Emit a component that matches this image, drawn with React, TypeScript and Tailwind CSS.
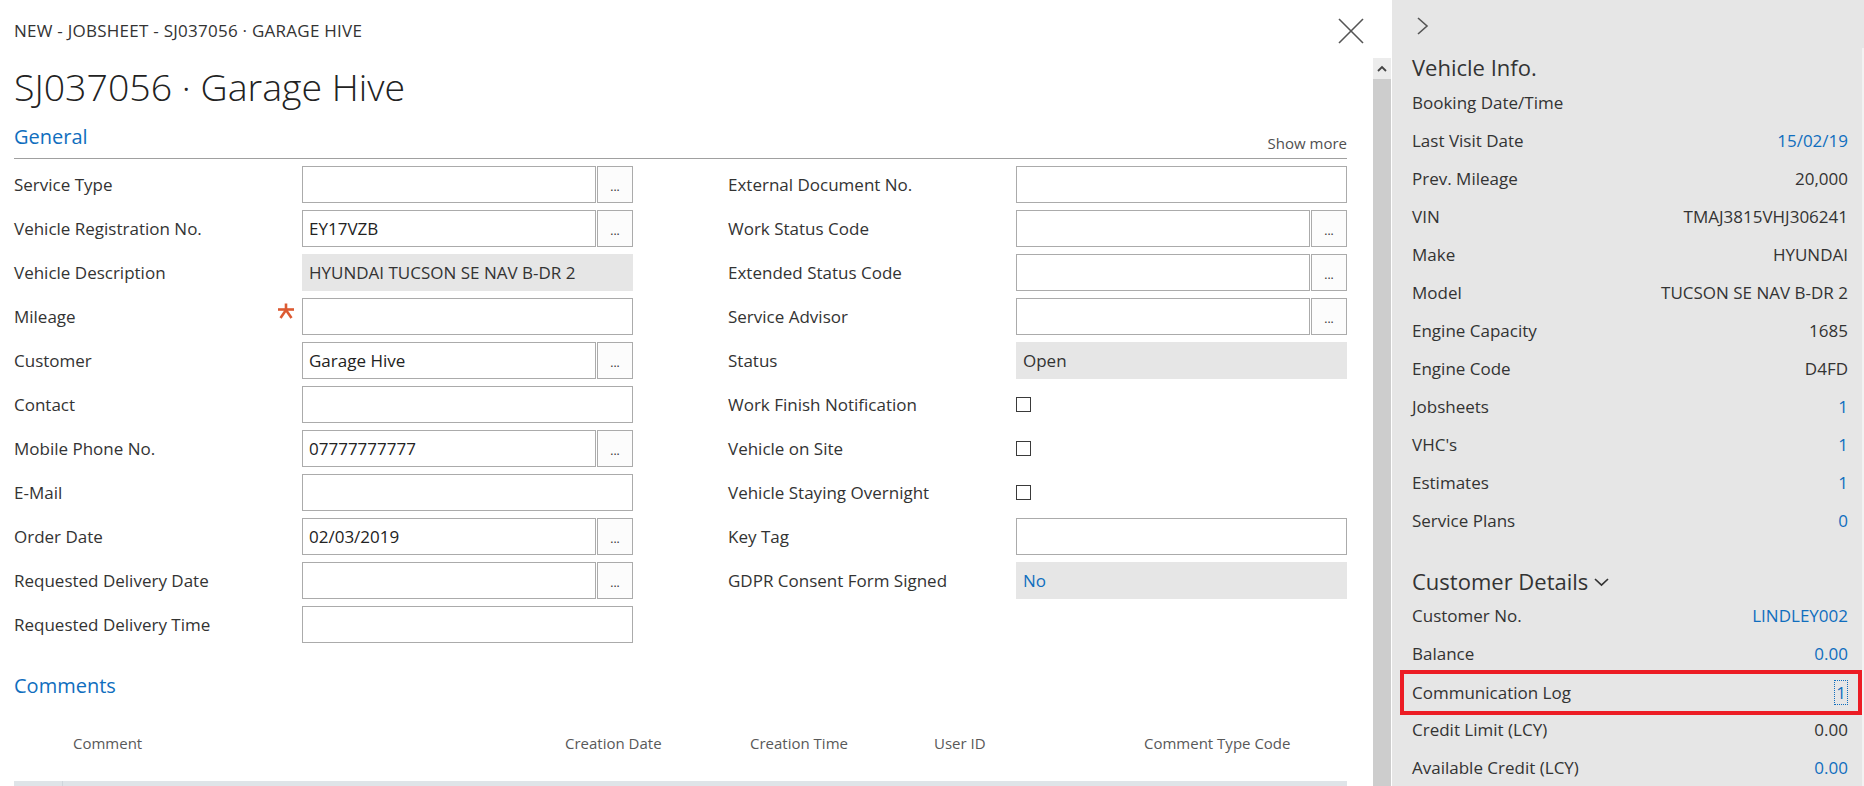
import type { FC } from "react";

type Field = {
  label: string;
  value?: string;
  kind: "input" | "lookup" | "readonly" | "check";
  required?: boolean;
  link?: boolean;
};

const leftFields: Field[] = [
  { label: "Service Type", kind: "lookup" },
  { label: "Vehicle Registration No.", value: "EY17VZB", kind: "lookup" },
  { label: "Vehicle Description", value: "HYUNDAI TUCSON SE NAV B-DR 2", kind: "readonly" },
  { label: "Mileage", kind: "input", required: true },
  { label: "Customer", value: "Garage Hive", kind: "lookup" },
  { label: "Contact", kind: "input" },
  { label: "Mobile Phone No.", value: "07777777777", kind: "lookup" },
  { label: "E-Mail", kind: "input" },
  { label: "Order Date", value: "02/03/2019", kind: "lookup" },
  { label: "Requested Delivery Date", kind: "lookup" },
  { label: "Requested Delivery Time", kind: "input" }
];

const rightFields: Field[] = [
  { label: "External Document No.", kind: "input" },
  { label: "Work Status Code", kind: "lookup" },
  { label: "Extended Status Code", kind: "lookup" },
  { label: "Service Advisor", kind: "lookup" },
  { label: "Status", value: "Open", kind: "readonly" },
  { label: "Work Finish Notification", kind: "check" },
  { label: "Vehicle on Site", kind: "check" },
  { label: "Vehicle Staying Overnight", kind: "check" },
  { label: "Key Tag", kind: "input" },
  { label: "GDPR Consent Form Signed", value: "No", kind: "readonly", link: true }
];

type Info = { label: string; value?: string; link?: boolean; focus?: boolean };

const vehicleInfo: Info[] = [
  { label: "Booking Date/Time" },
  { label: "Last Visit Date", value: "15/02/19", link: true },
  { label: "Prev. Mileage", value: "20,000" },
  { label: "VIN", value: "TMAJ3815VHJ306241" },
  { label: "Make", value: "HYUNDAI" },
  { label: "Model", value: "TUCSON SE NAV B-DR 2" },
  { label: "Engine Capacity", value: "1685" },
  { label: "Engine Code", value: "D4FD" },
  { label: "Jobsheets", value: "1", link: true },
  { label: "VHC's", value: "1", link: true },
  { label: "Estimates", value: "1", link: true },
  { label: "Service Plans", value: "0", link: true }
];

const customerInfo: Info[] = [
  { label: "Customer No.", value: "LINDLEY002", link: true },
  { label: "Balance", value: "0.00", link: true },
  { label: "Communication Log", value: "1", link: true, focus: true },
  { label: "Credit Limit (LCY)", value: "0.00" },
  { label: "Available Credit (LCY)", value: "0.00", link: true }
];

const Control: FC<{ field: Field }> = ({ field }) => {
  if (field.kind === "check") {
    return (
      <div className="flex h-full items-center">
        <div className="h-[15px] w-[15px] border border-[#3a3a3a] bg-white" />
      </div>
    );
  }
  if (field.kind === "readonly") {
    return (
      <div
        className={`flex h-full items-center bg-[#e6e6e6] pl-[7px] ${
          field.link ? "text-[#106ebe]" : "text-[#333]"
        }`}
      >
        {field.value}
      </div>
    );
  }
  const box = (
    <div className="flex h-full min-w-0 flex-1 items-center border border-[#ababab] bg-white pl-[6px] text-[#222]">
      {field.value}
    </div>
  );
  if (field.kind === "input") return <div className="flex h-full">{box}</div>;
  return (
    <div className="flex h-full gap-[1px]">
      {box}
      <div className="flex h-full w-[36px] shrink-0 items-center justify-center border border-[#ababab] bg-[#fcfcfc] pt-[5px] text-[12px] leading-[12px] text-[#333]">
        ...
      </div>
    </div>
  );
};

const FieldRow: FC<{ field: Field }> = ({ field }) => (
  <div className="flex h-[37px] shrink-0 items-center">
    <div className="flex w-[288px] shrink-0 items-center justify-between pr-[7px] text-[#333]">
      <span>{field.label}</span>
      {field.required && (
        <svg width="18" height="16" viewBox="0 0 18 16" className="-mt-[12px]">
          <g stroke="#dc5a32" strokeWidth="2.6" strokeLinecap="butt">
            <line x1="9" y1="0.5" x2="9" y2="8" />
            <line x1="1" y1="6.5" x2="17" y2="6.5" />
            <line x1="9" y1="7" x2="3.5" y2="15" />
            <line x1="9" y1="7" x2="14.5" y2="15" />
          </g>
        </svg>
      )}
    </div>
    <div className="h-full w-[331px] shrink-0">
      <Control field={field} />
    </div>
  </div>
);

const InfoRow: FC<{ item: Info }> = ({ item }) => {
  const value = (
    <span className={item.link ? "text-[#106ebe]" : "text-[#333]"}>
      {item.focus ? (
        <span className="border border-dotted border-[#106ebe] px-[1px] leading-[24px]">{item.value}</span>
      ) : (
        item.value
      )}
    </span>
  );
  if (item.focus) {
    return (
      <div className="-mb-[4px] -ml-[12px] -mr-[14px] -mt-[3px] flex h-[45px] shrink-0 items-center justify-between border-[4px] border-[#ec1c24] pl-[8px] pr-[10px]">
        <span className="text-[#333]">{item.label}</span>
        {value}
      </div>
    );
  }
  return (
    <div className="flex h-[38px] shrink-0 items-center justify-between">
      <span className="text-[#333]">{item.label}</span>
      {value}
    </div>
  );
};

const commentCols = [
  { label: "Comment", w: "w-[492px]" },
  { label: "Creation Date", w: "w-[185px]" },
  { label: "Creation Time", w: "w-[184px]" },
  { label: "User ID", w: "w-[210px]" },
  { label: "Comment Type Code", w: "w-[200px]" }
];

export default function App() {
  return (
    <div className="flex h-[786px] w-[1864px] overflow-hidden bg-white font-['Open_Sans',sans-serif] text-[17px] leading-[22px]">
      {/* main card */}
      <div className="flex w-[1373px] shrink-0 flex-col overflow-hidden pl-[14px] pr-[26px]">
        <div className="mt-[18px] flex h-[25px] shrink-0 items-center justify-between">
          <span className="text-[17px] leading-[20px] tracking-[0.25px] text-[#333]">
            NEW - JOBSHEET - SJ037056 · GARAGE HIVE
          </span>
          <svg width="26" height="26" viewBox="0 0 26 26" className="-mr-[17px]">
            <g stroke="#555" strokeWidth="1.6">
              <line x1="1" y1="1" x2="25" y2="25" />
              <line x1="25" y1="1" x2="1" y2="25" />
            </g>
          </svg>
        </div>
        <h1 className="mt-[20px] shrink-0 text-[37.5px] font-light leading-[48px] text-[#222]">SJ037056 · Garage Hive</h1>
        <div className="mt-[12px] flex h-[36px] shrink-0 justify-between border-b border-[#a0a0a0]">
          <span className="text-[20px] leading-[28px] text-[#106ebe]">General</span>
          <span className="mt-[10px] text-[15px] leading-[20px] text-[#505050]">Show more</span>
        </div>
        <div className="mt-[7px] flex shrink-0 gap-[95px]">
          <div className="flex flex-col gap-[7px]">
            {leftFields.map((f) => (
              <FieldRow key={f.label} field={f} />
            ))}
          </div>
          <div className="flex flex-col gap-[7px]">
            {rightFields.map((f) => (
              <FieldRow key={f.label} field={f} />
            ))}
          </div>
        </div>
        <div className="mt-[29px] shrink-0 text-[20px] leading-[28px] text-[#106ebe]">Comments</div>
        <div className="mt-[33px] flex shrink-0 pl-[59px] text-[15px] leading-[20px] text-[#595959]">
          {commentCols.map((c) => (
            <div key={c.label} className={`${c.w} shrink-0`}>
              {c.label}
            </div>
          ))}
        </div>
        <div className="mt-[28px] flex h-[8px] shrink-0 bg-[#dfe4e8]">
          <div className="w-[49px] border-r border-[#cfd6dc]" />
        </div>
      </div>

      {/* scrollbar */}
      <div className="flex w-[18px] shrink-0 flex-col pt-[58px]">
        <div className="flex h-[21px] shrink-0 items-center justify-center bg-[#ececec]">
          <svg width="10" height="7" viewBox="0 0 10 7">
            <polyline points="1,6 5,2 9,6" fill="none" stroke="#444" strokeWidth="1.8" />
          </svg>
        </div>
        <div className="flex-1 bg-[#cdcdcd]" />
      </div>
      <div className="w-[1px] shrink-0" />

      {/* fact box pane */}
      <div className="flex w-[472px] shrink-0 bg-[#e6e6e6]">
        <div className="flex min-w-0 flex-1 flex-col overflow-hidden pl-[20px] pr-[14px]">
          <svg width="13" height="18" viewBox="0 0 13 18" className="ml-[4px] mt-[17px] shrink-0">
            <polyline points="2,1 11,9 2,17" fill="none" stroke="#555" strokeWidth="1.6" />
          </svg>
          <div className="mt-[18px] shrink-0 text-[22px] leading-[28px] text-[#333]">Vehicle Info.</div>
          <div className="mt-[3px] flex shrink-0 flex-col">
            {vehicleInfo.map((i) => (
              <InfoRow key={i.label} item={i} />
            ))}
          </div>
          <div className="mt-[26px] flex shrink-0 items-center gap-[6px] text-[22px] leading-[30px] text-[#333]">
            <span>Customer Details</span>
            <svg width="15" height="10" viewBox="0 0 15 10" className="mt-[2px]">
              <polyline points="1,2 7.5,8 14,2" fill="none" stroke="#333" strokeWidth="1.7" />
            </svg>
          </div>
          <div className="mt-[1px] flex shrink-0 flex-col">
            {customerInfo.map((i) => (
              <InfoRow key={i.label} item={i} />
            ))}
          </div>
        </div>
        <div className="mt-[48px] w-[2px] shrink-0 bg-[#f2f2f2]" />
      </div>
    </div>
  );
}
